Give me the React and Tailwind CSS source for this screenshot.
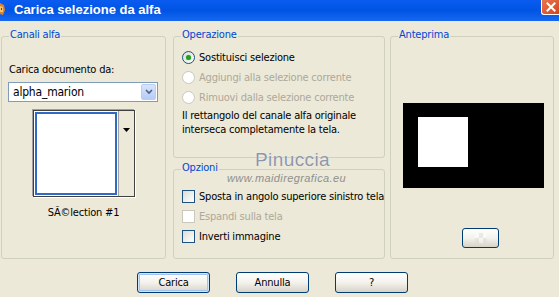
import React from "react";

function Group({ title, className, children }) {
  return (
    <div className={"relative rounded-[3px] border border-[#d0d0bf] " + className}>
      <span className="absolute left-[7px] -top-[9px] bg-[#ece9d8] px-[1px] text-[11px] leading-[14px] text-[#0046d5]">
        {title}
      </span>
      {children}
    </div>
  );
}

function Radio({ checked, disabled, label }) {
  return (
    <div className="flex h-[20px] items-center gap-[4px] whitespace-nowrap">
      <span
        className={
          disabled
            ? "flex h-[13px] w-[13px] shrink-0 items-center justify-center rounded-full border border-[#cac8bb] bg-white"
            : "flex h-[13px] w-[13px] shrink-0 items-center justify-center rounded-full border border-[#1c5180] bg-gradient-to-br from-[#dcdcd7] to-white"
        }
      >
        {checked && <span className="h-[5px] w-[5px] rounded-full bg-[#21a121] shadow-[0_0_1px_#5fd35f]" />}
      </span>
      <span className={disabled ? "text-[#aca899]" : "text-black"}>{label}</span>
    </div>
  );
}

function Check({ disabled, label }) {
  return (
    <div className="flex h-[20px] items-center gap-[4px] whitespace-nowrap">
      <span
        className={
          disabled
            ? "h-[13px] w-[13px] shrink-0 border border-[#cac8bb] bg-white"
            : "h-[13px] w-[13px] shrink-0 border border-[#1c5180] bg-gradient-to-br from-[#dcdcd7] to-white"
        }
      />
      <span className={disabled ? "text-[#aca899]" : "text-black"}>{label}</span>
    </div>
  );
}

function Btn({ children, def, className }) {
  return (
    <div
      className={
        "flex items-center justify-center rounded-[3px] border border-[#003c74] bg-gradient-to-b from-white via-[#f3f2ec] to-[#d8d3c8] text-[11px] text-black " +
        (def ? "shadow-[inset_0_0_0_1px_#cee7ff,inset_0_0_0_2px_#a4c2f0] " : "") +
        className
      }
    >
      {children}
    </div>
  );
}

export default function App() {
  return (
    <div className="relative h-[297px] w-[559px] overflow-hidden bg-[#ece9d8] font-['DejaVu_Sans_Condensed','DejaVu_Sans',sans-serif] text-[11px] leading-[13px] tracking-[-0.2px] text-black">
      {/* Title bar */}
      <div className="flex h-[21px] items-start bg-gradient-to-b from-[#0a5cf0] via-[#0054e3] to-[#1768f0]">
        <svg width="6" height="16" viewBox="0 0 6 16" className="mt-[1px]">
          <path d="M0 2 L4 4 L5 9 L3 14 L0 13 Z" fill="#d9832f" />
          <path d="M0 5 L3 6 L3 11 L0 11 Z" fill="#f6c36a" />
          <path d="M1 7 L2 7 L2 9 L1 9 Z" fill="#7a3b10" />
        </svg>
        <span className="ml-[8px] font-['Liberation_Sans',Arial,sans-serif] text-[13px] font-bold leading-[19px] tracking-normal text-white">
          Carica selezione da alfa
        </span>
        <div className="ml-auto flex h-[15px] w-[18px] items-center justify-center rounded-bl-[3px] border-b border-l border-white bg-gradient-to-br from-[#e8764f] to-[#d4421c]">
          <svg width="10" height="10" viewBox="0 0 10 10">
            <path d="M1.5 1.5 L8.5 8.5 M8.5 1.5 L1.5 8.5" stroke="white" strokeWidth="2" strokeLinecap="square" />
          </svg>
        </div>
      </div>

      {/* Groups */}
      <div className="mt-[15px] flex items-start">
        <Group title="Canali alfa" className="ml-[1px] h-[223px] w-[165px]">
          <div className="flex flex-col">
            <div className="ml-[7px] mt-[26px]">Carica documento da:</div>
            <div className="ml-[6px] mt-[6px] flex h-[20px] w-[150px] items-center border border-[#7f9db9] bg-white">
              <span className="ml-[4px] flex-1 text-[12px]">alpha_marion</span>
              <span className="mr-[1px] flex h-[16px] w-[15px] items-center justify-center rounded-[2px] border border-[#b9cdf5] bg-gradient-to-b from-[#d8e4fc] to-[#b6cbf6]">
                <svg width="8" height="6" viewBox="0 0 8 6">
                  <path d="M1 1 L4 4 L7 1" stroke="#4d6185" strokeWidth="1.6" fill="none" />
                </svg>
              </span>
            </div>
            <div className="mx-auto mt-[8px] flex h-[87px] w-[102px] border border-[#404040] shadow-[-1px_-1px_0_#a0a0a0,1px_1px_0_#ffffff]">
              <div className="flex-1 bg-white p-[1px]">
                <div className="h-full w-full border-[2px] border-[#316ac5] bg-white" />
              </div>
              <div className="relative w-[16px] border-l border-[#a0a0a0] bg-[#ece9d8]">
                <svg width="7" height="4" viewBox="0 0 7 4" className="absolute left-[4px] top-[17px]">
                  <path d="M0 0 L7 0 L3.5 4 Z" fill="#000" />
                </svg>
              </div>
            </div>
            <div className="mt-[9px] text-center">SÃ©lection #1</div>
          </div>
        </Group>

        <div className="ml-[7px] flex w-[212px] flex-col gap-[11px]">
          <Group title="Operazione" className="h-[122px]">
            <div className="flex flex-col pl-[8px] pt-[10px]">
              <Radio checked label="Sostituisci selezione" />
              <Radio disabled label="Aggiungi alla selezione corrente" />
              <Radio disabled label="Rimuovi dalla selezione corrente" />
              <div className="mt-[2px] whitespace-nowrap leading-[14px]">
                Il rettangolo del canale alfa originale
                <br />
                interseca completamente la tela.
              </div>
            </div>
          </Group>
          <Group title="Opzioni" className="h-[90px]">
            <div className="flex flex-col pl-[8px] pt-[16px]">
              <Check label="Sposta in angolo superiore sinistro tela" />
              <Check disabled label="Espandi sulla tela" />
              <Check label="Inverti immagine" />
            </div>
          </Group>
        </div>

        <Group title="Anteprima" className="ml-[5px] h-[223px] w-[164px]">
          <div className="flex flex-col">
            <div className="ml-[12px] mt-[66px] h-[85px] w-[141px] bg-black pl-[15px] pt-[14px]">
              <div className="h-[50px] w-[50px] bg-white" />
            </div>
            <Btn className="ml-[71px] mt-[40px] h-[20px] w-[37px]">
              <div className="grid h-[10px] w-[12px] grid-cols-3 opacity-40">
                <span className="bg-white" />
                <span className="bg-[#d8d8d8]" />
                <span className="bg-white" />
                <span className="bg-[#d8d8d8]" />
                <span className="bg-white" />
                <span className="bg-[#d8d8d8]" />
              </div>
            </Btn>
          </div>
        </Group>
      </div>

      {/* Buttons */}
      <div className="ml-[137px] mt-[13px] flex gap-[26px]">
        <Btn def className="h-[21px] w-[73px]">Carica</Btn>
        <Btn className="h-[21px] w-[73px]">Annulla</Btn>
        <Btn className="h-[21px] w-[73px]">?</Btn>
      </div>

      {/* Watermark */}
      <div className="pointer-events-none absolute left-[255px] top-[149px] font-['Liberation_Sans',Arial,sans-serif] text-[19px] leading-[22px] tracking-[0.4px] text-[#8d97ab] [text-shadow:0_0_1px_#ffffff]">
        Pinuccia
      </div>
      <div className="pointer-events-none absolute left-[227px] top-[172px] font-['Liberation_Sans',Arial,sans-serif] text-[11px] italic leading-[13px] tracking-[0.4px] text-[#8f8f8f]">
        www.maidiregrafica.eu
      </div>
    </div>
  );
}
